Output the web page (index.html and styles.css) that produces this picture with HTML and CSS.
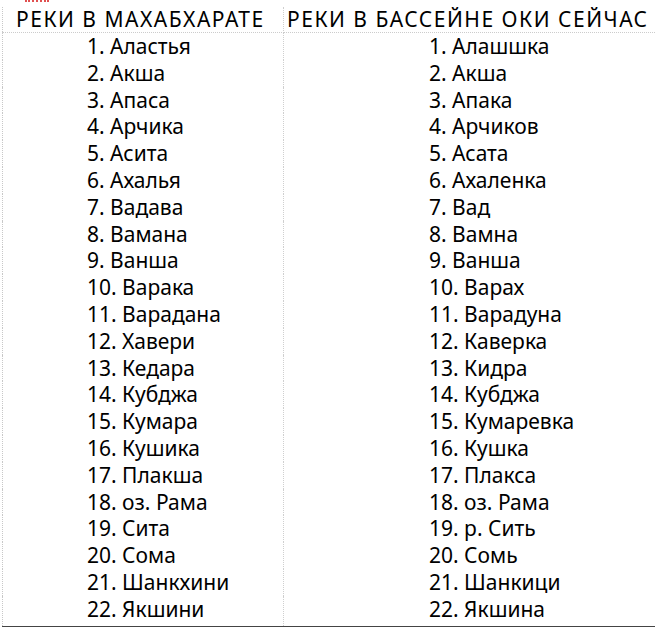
FILE: index.html
```html
<!DOCTYPE html>
<html lang="ru">
<head>
<meta charset="utf-8">
<link rel="stylesheet" href="styles.css">
</head>
<body>
<div class="sheet">
  <div class="mark"></div>
  <table class="rivers">
    <thead>
      <tr>
        <th class="col-left">РЕКИ В МАХАБХАРАТЕ</th>
        <th class="col-right">РЕКИ В БАССЕЙНЕ ОКИ СЕЙЧАС</th>
      </tr>
    </thead>
    <tbody>
      <tr><td class="col-left">1. Аластья</td><td class="col-right">1. Алашшка</td></tr>
      <tr><td class="col-left">2. Акша</td><td class="col-right">2. Акша</td></tr>
      <tr><td class="col-left">3. Апаса</td><td class="col-right">3. Апака</td></tr>
      <tr><td class="col-left">4. Арчика</td><td class="col-right">4. Арчиков</td></tr>
      <tr><td class="col-left">5. Асита</td><td class="col-right">5. Асата</td></tr>
      <tr><td class="col-left">6. Ахалья</td><td class="col-right">6. Ахаленка</td></tr>
      <tr><td class="col-left">7. Вадава</td><td class="col-right">7. Вад</td></tr>
      <tr><td class="col-left">8. Вамана</td><td class="col-right">8. Вамна</td></tr>
      <tr><td class="col-left">9. Ванша</td><td class="col-right">9. Ванша</td></tr>
      <tr><td class="col-left">10. Варака</td><td class="col-right">10. Варах</td></tr>
      <tr><td class="col-left">11. Варадана</td><td class="col-right">11. Варадуна</td></tr>
      <tr><td class="col-left">12. Хавери</td><td class="col-right">12. Каверка</td></tr>
      <tr><td class="col-left">13. Кедара</td><td class="col-right">13. Кидра</td></tr>
      <tr><td class="col-left">14. Кубджа</td><td class="col-right">14. Кубджа</td></tr>
      <tr><td class="col-left">15. Кумара</td><td class="col-right">15. Кумаревка</td></tr>
      <tr><td class="col-left">16. Кушика</td><td class="col-right">16. Кушка</td></tr>
      <tr><td class="col-left">17. Плакша</td><td class="col-right">17. Плакса</td></tr>
      <tr><td class="col-left">18. оз. Рама</td><td class="col-right">18. оз. Рама</td></tr>
      <tr><td class="col-left">19. Сита</td><td class="col-right">19. р. Сить</td></tr>
      <tr><td class="col-left">20. Сома</td><td class="col-right">20. Сомь</td></tr>
      <tr><td class="col-left">21. Шанкхини</td><td class="col-right">21. Шанкици</td></tr>
      <tr><td class="col-left">22. Якшини</td><td class="col-right">22. Якшина</td></tr>
    </tbody>
  </table>
</div>
</body>
</html>
```

FILE: styles.css
```css
html, body {
  margin: 0;
  padding: 0;
  background: #ffffff;
}

.sheet {
  position: relative;
  width: 655px;
  height: 629px;
  padding-top: 7px;
  box-sizing: border-box;
  font-family: "Noto Sans", "Open Sans", sans-serif;
  color: #000000;
}

.mark {
  position: absolute;
  left: 25px;
  top: 0;
  width: 24px;
  height: 2px;
  border-top: 2px dotted #e05050;
  box-sizing: border-box;
}

.rivers {
  border-collapse: collapse;
  width: 653px;
  margin-left: 2px;
  border-left: 1px dotted #c8c8c8;
  border-bottom: 1px solid #444444;
}

.rivers th,
.rivers td {
  padding: 0;
  font-weight: normal;
  white-space: nowrap;
}

.rivers th {
  font-size: 21px;
  letter-spacing: 1.5px;
  height: 25px;
  line-height: 25px;
  text-align: left;
  border-bottom: 1px dotted #cccccc;
}

.rivers td {
  font-size: 21px;
  height: 26.8px;
  line-height: 26.8px;
}

.rivers tbody tr:last-child td {
  height: 30px;
  line-height: 26.8px;
  vertical-align: top;
}

th.col-left {
  width: 281px;
  padding-left: 13px;
  box-sizing: border-box;
  border-right: 1px dotted #cfcfcf;
}

th.col-right {
  padding-left: 3px;
}

td.col-left {
  padding-left: 84px;
  border-right: 1px dotted #cfcfcf;
}

td.col-right {
  padding-left: 145px;
}
```
